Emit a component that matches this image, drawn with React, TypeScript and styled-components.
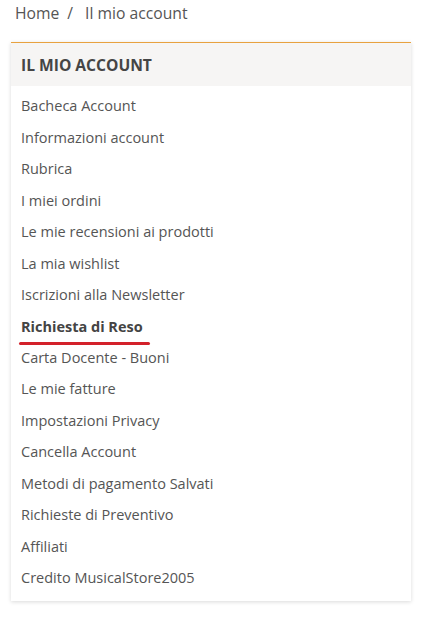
import React from 'react'
import styled, { createGlobalStyle } from 'styled-components';

const GlobalStyle = createGlobalStyle`
  body {
    margin: 0;
    background: #fff;
    font-family: "Open Sans", "Liberation Sans", sans-serif;
  }
`;

const Page = styled.div`
  padding: 0 11px 16px 11px;
  width: 423px;
  box-sizing: border-box;
`;

const Breadcrumb = styled.div`
  display: flex;
  align-items: flex-start;
  gap: 8px;
  padding: 2px 0 0 4px;
  height: 42px;
  box-sizing: border-box;
  font-size: 15.7px;
  line-height: 22px;
  color: #555;
`;

const Sep = styled.span`
  margin-right: 4px;
`;

const Card = styled.div`
  width: 400px;
  border-top: 1px solid #e8a23f;
  background: #fff;
  box-shadow: 0 1px 4px rgba(0, 0, 0, 0.15);
`;

const Header = styled.div`
  background: #f6f5f4;
  height: 43px;
  display: flex;
  align-items: center;
  padding-left: 10px;
  font-size: 15.6px;
  font-weight: 700;
  color: #454545;
`;

const List = styled.ul`
  list-style: none;
  margin: 0;
  padding: 4px 0 7px 10px;
`;

const Item = styled.li<{ $active?: boolean }>`
  height: 31.47px;
  display: flex;
  align-items: center;
  font-size: 14.5px;
  color: ${p => (p.$active ? '#444' : '#555')};
  font-weight: ${p => (p.$active ? 700 : 400)};
`;

const Active = styled.span`
  position: relative;
  &::after {
    content: '';
    position: absolute;
    left: -2px;
    right: -7px;
    bottom: -9px;
    height: 3px;
    border-radius: 2px;
    background: #d3212a;
  }
`;

const items = [
  'Bacheca Account',
  'Informazioni account',
  'Rubrica',
  'I miei ordini',
  'Le mie recensioni ai prodotti',
  'La mia wishlist',
  'Iscrizioni alla Newsletter',
  'Richiesta di Reso',
  'Carta Docente - Buoni',
  'Le mie fatture',
  'Impostazioni Privacy',
  'Cancella Account',
  'Metodi di pagamento Salvati',
  'Richieste di Preventivo',
  'Affiliati',
  'Credito MusicalStore2005',
];

export default function App() {
  return (
    <>
      <GlobalStyle />
      <Page>
        <Breadcrumb>
          <span>Home</span>
          <Sep>/</Sep>
          <span>Il mio account</span>
        </Breadcrumb>
        <Card>
          <Header>IL MIO ACCOUNT</Header>
          <List>
            {items.map(it =>
              it === 'Richiesta di Reso' ? (
                <Item key={it} $active><Active>{it}</Active></Item>
              ) : (
                <Item key={it}>{it}</Item>
              )
            )}
          </List>
        </Card>
      </Page>
    </>
  )
}
